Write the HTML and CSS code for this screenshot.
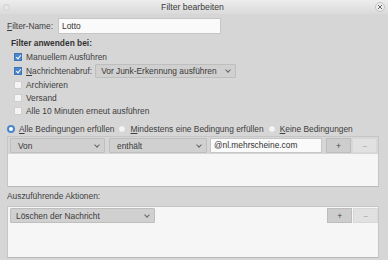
FILE: index.html
```html
<!DOCTYPE html>
<html lang="de">
<head>
  <meta charset="UTF-8">
  <title>Filter bearbeiten</title>
  <link rel="stylesheet" href="styles.css">
</head>
<body>

<div class="window">
  <div class="titlebar">
    <span class="dot"></span>
    <span class="title">Filter bearbeiten</span>
    <span class="close">
      <svg width="6" height="6" viewBox="0 0 6 6"><path d="M1 1L5 5M5 1L1 5" stroke="#666" stroke-width="1"/></svg>
    </span>
  </div>

  <div class="name-row">
    <span class="name-label"><u>F</u>ilter-Name:</span>
    <div class="field name-field">Lotto</div>
  </div>

  <div class="group-title">Filter anwenden bei:</div>

  <div class="checks">
    <div class="check-row"><span class="box on"></span>Manuellem Ausführen</div>
    <div class="check-row">
      <span class="box on"></span><u>N</u>achrichtenabruf:
      <div class="select junk-select">Vor Junk-Erkennung ausführen<span class="chev"></span></div>
    </div>
    <div class="check-row short"><span class="box"></span>Archivieren</div>
    <div class="check-row short"><span class="box"></span>Versand</div>
    <div class="check-row short"><span class="box"></span>Alle 10 Minuten erneut ausführen</div>
  </div>

  <div class="radios">
    <span class="radio on"></span><span class="radio-text"><u>A</u>lle Bedingungen erfüllen</span>
    <span class="radio"></span><span class="radio-text"><u>M</u>indestens eine Bedingung erfüllen</span>
    <span class="radio"></span><span class="radio-text"><u>K</u>eine Bedingungen</span>
  </div>

  <div class="panel rules">
    <div class="rule-row">
      <div class="select from-select">Von<span class="chev"></span></div>
      <div class="select op-select">enthält<span class="chev"></span></div>
      <div class="field value-field">@nl.mehrscheine.com</div>
      <button class="btn">+</button>
      <button class="btn off">−</button>
    </div>
    <div class="panel-body"></div>
  </div>

  <div class="section-label">Auszuführende Aktionen:</div>

  <div class="panel actions">
    <div class="rule-row">
      <div class="select action-select">Löschen der Nachricht<span class="chev"></span></div>
      <button class="btn">+</button>
      <button class="btn off">−</button>
    </div>
  </div>
</div>

</body>
</html>
```

FILE: styles.css
```css
body {
  margin: 0;
  font-family: "Liberation Sans", Arial, sans-serif;
  font-size: 8.4px;
  color: #3e3e3e;
  background: #d6d6d6;
}

u {
  text-decoration: underline;
  text-underline-offset: 1px;
}

.window {
  width: 388px;
  height: 260px;
  background: #d6d6d6;
  overflow: hidden;
}

.titlebar {
  height: 14px;
  display: flex;
  align-items: center;
  justify-content: space-between;
  padding: 0 3px 0 3px;
  background: linear-gradient(#ededed, #dadada);
}

.title {
  color: #3a3a3a;
  font-size: 8.7px;
}

.dot {
  width: 7px;
  height: 7px;
  border-radius: 50%;
  background: #e6e6e6;
  border: 1px solid #d0d0d0;
  box-sizing: border-box;
}

.close {
  width: 10px;
  height: 10px;
  border-radius: 50%;
  border: 1px solid #c4c4c4;
  background: #ebebeb;
  box-sizing: border-box;
  display: flex;
  align-items: center;
  justify-content: center;
}

.name-row {
  display: flex;
  align-items: center;
  margin-top: 4px;
  height: 16px;
  padding-left: 7px;
}

.name-label {
  width: 51px;
}

.field {
  box-sizing: border-box;
  background: #fafafa;
  border: 1px solid #c6c6c6;
  height: 16px;
  line-height: 14px;
  padding-left: 3px;
  color: #333;
}

.name-field {
  width: 163px;
}

.group-title {
  font-weight: bold;
  margin-top: 3px;
  height: 12px;
  line-height: 12px;
  padding-left: 11px;
  color: #333;
}

.checks {
  margin-top: 1px;
}

.check-row {
  display: flex;
  align-items: center;
  height: 14px;
  padding-left: 14px;
}

.check-row.short {
  height: 13.4px;
}

.box {
  width: 8px;
  height: 8px;
  box-sizing: border-box;
  background: #f4f4f4;
  border: 1px solid #cfcfcf;
  margin-right: 4px;
  position: relative;
}

.box.on {
  background: #4b86cc;
  border-color: #3f74b5;
}

.box.on::after {
  content: "";
  position: absolute;
  left: 1.5px;
  top: 0px;
  width: 2px;
  height: 4px;
  border: solid #fff;
  border-width: 0 1.2px 1.2px 0;
  transform: rotate(40deg);
}

.select {
  box-sizing: border-box;
  display: flex;
  align-items: center;
  justify-content: space-between;
  height: 15px;
  padding: 0 5px 0 7px;
  background: #d0d0d0;
  border: 1px solid #bebebe;
  border-radius: 1px;
  color: #3a3a3a;
}

.chev {
  width: 3px;
  height: 3px;
  border: solid #666;
  border-width: 0 1px 1px 0;
  transform: rotate(45deg);
  margin-top: -2px;
}

.junk-select {
  width: 141px;
  height: 14px;
  margin-left: 3px;
  padding-left: 5px;
}

.radios {
  display: flex;
  align-items: center;
  margin-top: 5px;
  height: 12px;
  padding-left: 7px;
}

.radio {
  width: 8px;
  height: 8px;
  box-sizing: border-box;
  border-radius: 50%;
  background: #f4f4f4;
  border: 1px solid #d2d2d2;
  margin-right: 4px;
}

.radio.on {
  background: #fff;
  border: 2.5px solid #4b86cc;
}

.radio-text {
  margin-right: 4px;
}

.panel {
  margin: 1px 9px 0 7px;
  border: 1px solid #c6c6c6;
  border-bottom-color: #b9b9b9;
}

.rules {
  height: 51px;
  box-sizing: border-box;
  display: flex;
  flex-direction: column;
}

.rule-row {
  display: flex;
  align-items: center;
  height: 17px;
  padding-left: 2px;
}

.panel-body {
  flex: 1;
  background: #f6f6f6;
}

.from-select {
  width: 95px;
}

.op-select {
  width: 98px;
  margin-left: 4px;
}

.value-field {
  width: 112px;
  margin-left: 3px;
  height: 15px;
  line-height: 13px;
}

.btn {
  box-sizing: border-box;
  width: 25px;
  height: 15px;
  padding: 0;
  border: 1px solid #bdbdbd;
  background: #cdcdcd;
  color: #444;
  font-family: inherit;
  font-size: 8.6px;
  line-height: 12px;
}

.rule-row .btn:first-of-type {
  margin-left: 4px;
}

.btn.off {
  margin-left: 1px;
  background: #e1e1e1;
  border-color: #d8d8d8;
  color: #a8a8a8;
}

.section-label {
  margin-top: 3px;
  height: 12px;
  line-height: 12px;
  padding-left: 7px;
}

.actions {
  margin-top: 4px;
  height: 52px;
  box-sizing: border-box;
  background: #f6f6f6;
}

.actions .rule-row {
  height: 17px;
  padding-top: 1px;
  align-items: flex-start;
}

.action-select {
  width: 146px;
  padding-left: 5px;
}

.actions .btn:first-of-type {
  margin-left: 172px;
}
```
